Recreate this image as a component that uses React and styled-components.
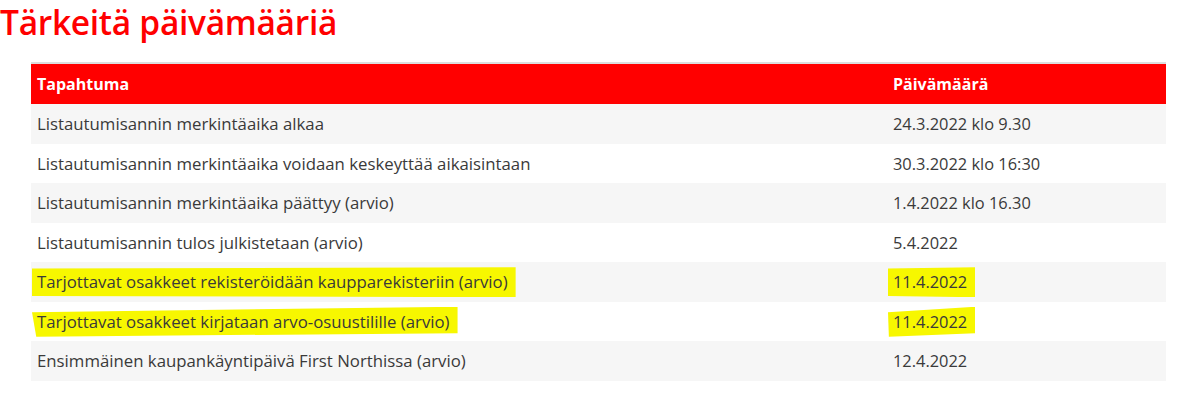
import styled, { createGlobalStyle } from "styled-components";

const GlobalStyle = createGlobalStyle`
  body {
    margin: 0;
    background: #fff;
    font-family: "Open Sans", "Noto Sans", sans-serif;
  }
`;

const Page = styled.div`
  width: 1180px;
  height: 403px;
  overflow: hidden;
`;

const Title = styled.h1`
  margin: 0;
  padding: 2px 0 0;
  color: #ff0000;
  font-size: 33.5px;
  font-weight: 600;
  line-height: 40px;
  letter-spacing: -0.3px;
`;

const Table = styled.table`
  margin: 20px 0 0 31px;
  width: 1135px;
  border-collapse: collapse;
  border-top: 2px solid #ddd;
  font-size: 16.8px;
  color: #3a3a3a;
`;

const HeadCell = styled.th`
  background: #ff0000;
  color: #fff;
  font-size: 16px;
  font-weight: 700;
  text-align: left;
  height: 40px;
  padding: 0 6px;
  width: ${(p) => p.width || "auto"};
`;

const Row = styled.tr`
  background: ${(p) => (p.striped ? "#f6f6f6" : "#fff")};
`;

const Cell = styled.td`
  height: 39.5px;
  padding: 0 6px;
  vertical-align: middle;
  font-size: ${(p) => (p.date ? "16.4px" : "inherit")};
`;

const Mark = styled.span`
  background: #f7f700;
  padding: 3px 8px 4px 5px;
  margin-left: -5px;
  clip-path: ${(p) =>
    p.tilt
      ? "polygon(0 18%, 100% 0, 100% 88%, 1% 100%)"
      : "polygon(0 4%, 100% 0, 100% 100%, 0 96%)"};
`;

const rows = [
  { event: "Listautumisannin merkintäaika alkaa", date: "24.3.2022 klo 9.30" },
  { event: "Listautumisannin merkintäaika voidaan keskeyttää aikaisintaan", date: "30.3.2022 klo 16:30" },
  { event: "Listautumisannin merkintäaika päättyy (arvio)", date: "1.4.2022 klo 16.30" },
  { event: "Listautumisannin tulos julkistetaan (arvio)", date: "5.4.2022" },
  { event: "Tarjottavat osakkeet rekisteröidään kaupparekisteriin (arvio)", date: "11.4.2022", marked: true },
  { event: "Tarjottavat osakkeet kirjataan arvo-osuustilille (arvio)", date: "11.4.2022", marked: true, tilt: true },
  { event: "Ensimmäinen kaupankäyntipäivä First Northissa (arvio)", date: "12.4.2022" },
];

const App = () => {
  return (
    <>
      <GlobalStyle />
      <Page>
        <Title>Tärkeitä päivämääriä</Title>
        <Table>
          <thead>
            <tr>
              <HeadCell width="844px">Tapahtuma</HeadCell>
              <HeadCell>Päivämäärä</HeadCell>
            </tr>
          </thead>
          <tbody>
            {rows.map((r, i) => (
              <Row key={i} striped={i % 2 === 0}>
                <Cell>{r.marked ? <Mark tilt={r.tilt}>{r.event}</Mark> : r.event}</Cell>
                <Cell date>{r.marked ? <Mark tilt={r.tilt}>{r.date}</Mark> : r.date}</Cell>
              </Row>
            ))}
          </tbody>
        </Table>
      </Page>
    </>
  );
};

export default App;
